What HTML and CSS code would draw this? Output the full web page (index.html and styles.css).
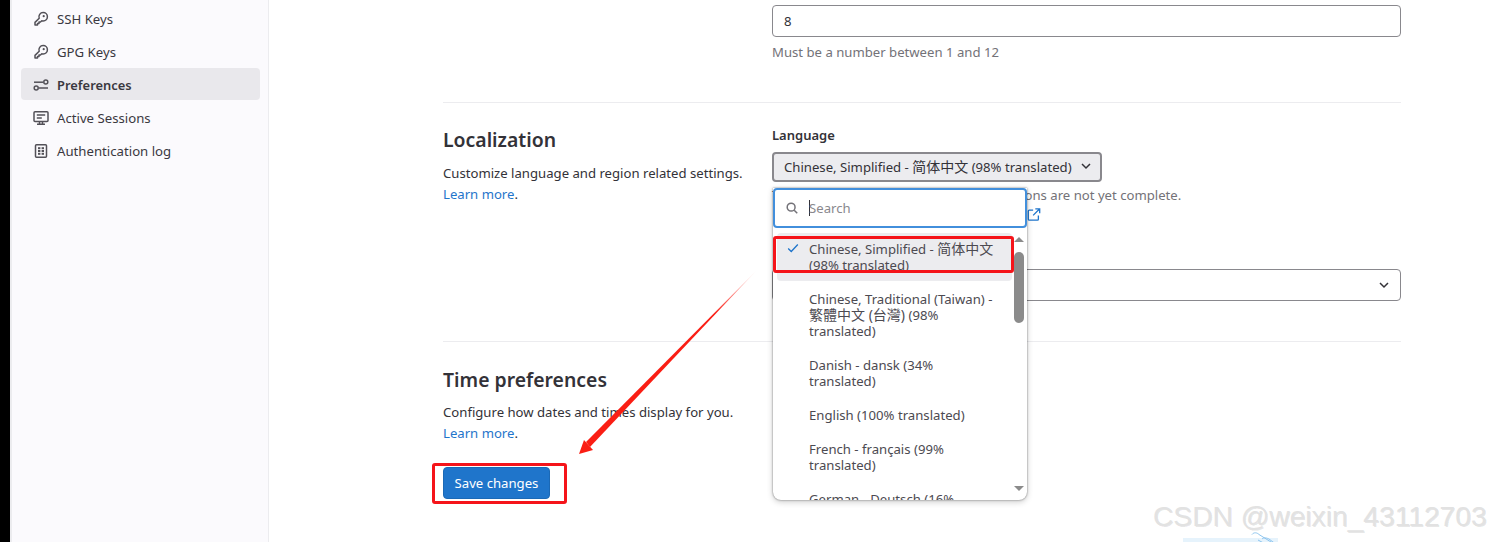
FILE: index.html
```html
<!DOCTYPE html>
<html lang="en">
<head>
<meta charset="utf-8">
<title>Preferences</title>
<link rel="stylesheet" href="styles.css">
</head>
<body>
<div class="page">
  <div class="edge"></div>
  <aside class="sidebar">
    <nav class="nav">
      <a class="nav-item"><svg class="nav-icon" viewBox="0 0 16 16"><path d="M10.2 1.6a4.2 4.2 0 0 1 0 8.4c-.5 0-1-.1-1.4-.2L7.5 11H6v1.5H4.500V14H2v-2.600l4.200-4.100A4.200 4.200 0 0 1 10.200 1.600z" fill="none" stroke="#535158" stroke-width="1.500" stroke-linejoin="round"/><circle cx="10.700" cy="5.200" r="1.100" fill="#535158"/></svg><span>SSH Keys</span></a>
      <a class="nav-item"><svg class="nav-icon" viewBox="0 0 16 16"><path d="M10.2 1.6a4.2 4.2 0 0 1 0 8.4c-.5 0-1-.1-1.4-.2L7.5 11H6v1.5H4.500V14H2v-2.600l4.200-4.100A4.200 4.200 0 0 1 10.200 1.600z" fill="none" stroke="#535158" stroke-width="1.500" stroke-linejoin="round"/><circle cx="10.700" cy="5.200" r="1.100" fill="#535158"/></svg><span>GPG Keys</span></a>
      <a class="nav-item active"><svg class="nav-icon" viewBox="0 0 16 16"><g fill="none" stroke="#535158" stroke-width="1.500"><path d="M1 5.200h9.300"/><circle cx="12.800" cy="5" r="2"/><circle cx="3.200" cy="11" r="2"/><path d="M5.700 11H15"/></g></svg><span>Preferences</span></a>
      <a class="nav-item"><svg class="nav-icon" viewBox="0 0 16 16"><g fill="none" stroke="#535158" stroke-width="1.500"><rect x="1" y="1.700" width="14" height="9.800" rx="1"/><path d="M3.800 5h8.400M3.800 8h5M6.500 11.500v2.500M9.500 11.500v2.500M4 14.300h8"/></g></svg><span>Active Sessions</span></a>
      <a class="nav-item"><svg class="nav-icon" viewBox="0 0 16 16"><g fill="none" stroke="#535158" stroke-width="1.500"><rect x="2.500" y="1.700" width="11" height="12.600" rx="1"/></g><g fill="#535158"><rect x="5" y="4.200" width="2.400" height="2"/><rect x="8.600" y="4.200" width="2.400" height="2"/><rect x="5" y="7" width="2.400" height="2"/><rect x="8.600" y="7" width="2.400" height="2"/><rect x="5" y="9.800" width="2.400" height="2"/><rect x="8.600" y="9.800" width="2.400" height="2"/></g></svg><span>Authentication log</span></a>
    </nav>
  </aside>
  <main class="main">
    <section class="row row-first">
      <div class="row-side"></div>
      <div class="row-body">
        <div class="text-input">8</div>
        <p class="help">Must be a number between 1 and 12</p>
      </div>
    </section>
    <section class="row row-local">
      <div class="row-side">
        <h2 class="title">Localization</h2>
        <p class="desc">Customize language and region related settings.</p>
        <p class="desc"><a class="link">Learn more</a>.</p>
      </div>
      <div class="row-body">
        <label class="label">Language</label>
        <div class="lang-field">
          <button class="select-btn" type="button"><span>Chinese, Simplified - <span class="cjk">简体中文</span> (98% translated)</span><svg class="chev" viewBox="0 0 16 16"><path d="M4 6l4 4 4-4" fill="none" stroke="#333238" stroke-width="1.500"/></svg></button>
          <p class="help help-lang">This feature is experimental and translations are not yet complete.</p>
          <p class="help help-link"><svg class="ext" viewBox="0 0 16 16"><path d="M7 3H2.500A1.000 1.000 0 0 0 1.500 4v9.500a1 1 0 0 0 1 1H12a1 1 0 0 0 1-1V9M9.500 1.500h5v5M14.500 1.500L7 9" fill="none" stroke="#1f75cb" stroke-width="1.500"/></svg></p>
          <div class="dropdown">
            <div class="search">
              <svg class="search-icon" viewBox="0 0 16 16"><circle cx="7" cy="7" r="4.500" fill="none" stroke="#737278" stroke-width="1.700"/><path d="M10.500 10.500L14 14" stroke="#737278" stroke-width="1.700"/></svg>
              <span class="caret"></span><span class="placeholder">Search</span>
            </div>
            <div class="list-wrap">
              <ul class="list">
                <li class="option selected"><svg class="check" viewBox="0 0 16 16"><path d="M2.500 8.500l3.500 3.500 7.500-8" fill="none" stroke="#1f75cb" stroke-width="1.500"/></svg>Chinese, Simplified - <span class="cjk">简体中文</span> (98% translated)</li>
                <li class="option">Chinese, Traditional (Taiwan) - <span class="cjk">繁體中文 (台灣)</span> (98% translated)</li>
                <li class="option">Danish - dansk (34% translated)</li>
                <li class="option">English (100% translated)</li>
                <li class="option">French - français (99% translated)</li>
                <li class="option">German - Deutsch (16% translated)</li>
              </ul>
              <div class="scrollbar">
                <span class="arrow-up"></span>
                <span class="thumb"></span>
                <span class="arrow-down"></span>
              </div>
            </div>
          </div>
        </div>
        <div class="select-wide"><svg class="chev" viewBox="0 0 16 16"><path d="M4 6l4 4 4-4" fill="none" stroke="#333238" stroke-width="1.500"/></svg></div>
      </div>
    </section>
    <section class="row row-time">
      <div class="row-side">
        <h2 class="title">Time preferences</h2>
        <p class="desc">Configure how dates and times display for you.</p>
        <p class="desc"><a class="link">Learn more</a>.</p>
        <button class="save" type="button">Save changes</button>
      </div>
      <div class="row-body"></div>
    </section>
  </main>
  <div class="mark mark-save"></div>
  <div class="mark mark-option"></div>
  <svg class="arrow" viewBox="0 0 1490 542">
    <defs><linearGradient id="fade" gradientUnits="userSpaceOnUse" x1="757" y1="270" x2="590" y2="445"><stop offset="0" stop-color="#fa1e14" stop-opacity="0"/><stop offset=".25" stop-color="#fa1e14"/><stop offset="1" stop-color="#fa1e14"/></linearGradient></defs>
    <polygon points="757,270 586,442 590,447" fill="url(#fade)"/>
    <polygon points="579,454 584,440 593,450" fill="#fa1e14"/>
  </svg>
  <div class="watermark">CSDN @weixin_43112703</div>
  <div class="tag"></div>
  <svg class="clip" viewBox="0 0 30 14"><path d="M2 2.500c2-2.500 5-2 7 0l16 10c2 1.500 0 4-3 3L8 8" fill="none" stroke="#8cc4ee" stroke-width="1"/><path d="M12 7c2-2 5-1 7 0l8 6" fill="none" stroke="#8cc4ee" stroke-width="1"/></svg>
</div>
</body>
</html>
```
FILE: styles.css
```css
* { box-sizing: border-box; }
html, body { margin: 0; padding: 0; background: #fff; }
body {
  font-family: "Noto Sans", "Noto Sans CJK SC", sans-serif;
  font-size: 13.15px;
  color: #333238;
}
.cjk { font-size: 14px; }
.page {
  position: relative;
  width: 1490px;
  height: 542px;
  overflow: hidden;
  display: flex;
}
.edge { width: 10px; background: #000; flex: none; }
.sidebar {
  width: 259px;
  flex: none;
  background: #fbfafd;
  border-left: 2px solid #ececef;
  border-right: 1px solid #ececef;
  padding: 2px 8px 0 9px;
}
.nav { display: flex; flex-direction: column; gap: 1px; }
.nav-item {
  height: 32px;
  display: flex;
  align-items: center;
  gap: 8px;
  padding: 2px 12px 0;
  border-radius: 4px;
  color: #3a383f;
  font-size: 13.2px;
}
.nav-item.active { background: #e9e8ec; font-weight: 600; font-size: 12.9px; }
.nav-icon { width: 16px; height: 16px; flex: none; }
.main { flex: none; width: 958px; margin-left: 174px; }
.row { display: flex; }
.row-side { width: 329px; flex: none; }
.row-body { flex: 1; min-width: 0; }
.row-first { padding-top: 5px; height: 102px; }
.row-local { border-top: 1px solid #ececef; padding-top: 23px; height: 239px; }
.row-time { border-top: 1px solid #ececef; padding-top: 24px; }
.text-input {
  height: 32px;
  border: 1px solid #89888d;
  border-radius: 4px;
  padding: 0 11px;
  line-height: 30px;
}
.help { margin: 5px 0 0; color: #737278; line-height: 20px; }
.title { margin: 0 0 9px; font-size: 19.4px; font-weight: 600; line-height: 28px; color: #333238; }
.row-time .title { margin-bottom: 8px; }
.desc { margin: 0; line-height: 21px; }
.link { color: #1f75cb; }
.label { display: block; font-weight: 600; font-size: 13px; line-height: 20px; margin-bottom: 7px; margin-top: -1px; }
.lang-field { position: relative; }
.select-btn {
  display: flex;
  align-items: center;
  justify-content: space-between;
  width: 330px;
  height: 30px;
  padding: 0 6px 2px 10px;
  background: #ececef;
  border: 2px solid #89888d;
  border-radius: 4px;
  font: inherit;
  color: #333238;
}
.chev { width: 16px; height: 16px; flex: none; }
.help-lang { margin: 3px 0 0; }
.help-link { margin: 0; height: 18px; display: flex; align-items: center; justify-content: flex-end; width: 269px; }
.ext { width: 14px; height: 15px; flex: none; }
.select-wide {
  margin-top: 46px;
  height: 32px;
  border: 1px solid #89888d;
  border-radius: 4px;
  display: flex;
  justify-content: flex-end;
  align-items: center;
  padding-right: 8px;
}
.dropdown {
  position: absolute;
  left: 1px;
  top: 36px;
  width: 254px;
  height: 312px;
  background: #fff;
  border-radius: 0 0 8px 8px;
  box-shadow: 0 0 2px rgba(0,0,0,.55), 0 2px 6px rgba(0,0,0,.2);
  overflow: hidden;
  display: flex;
  flex-direction: column;
}
.search {
  flex: none;
  height: 40px;
  border: 2px solid #428fdc;
  border-radius: 4px;
  display: flex;
  align-items: center;
  padding-left: 10px;
  background: #fff;
}
.search-icon { width: 14px; height: 14px; flex: none; margin-right: 10px; }
.caret { width: 1px; height: 16px; background: #333238; flex: none; }
.placeholder { color: #89888d; margin-left: -1px; }
.list-wrap { flex: 1; min-height: 0; display: flex; }
.list {
  list-style: none;
  margin: 0;
  padding: 5px 0 0 4px;
  width: 239px;
  flex: none;
  overflow: hidden;
}
.option {
  position: relative;
  padding: 8px 14px 8px 32px;
  margin-bottom: 2px;
  border-radius: 4px;
  line-height: 16px;
  color: #4c4a51;
}
.option.selected { background: #ececef; }
.check { position: absolute; left: 9px; top: 8px; width: 14px; height: 14px; }
.scrollbar {
  flex: 1;
  display: flex;
  flex-direction: column;
  align-items: center;
  padding: 9px 2px 0 0;
}
.arrow-up { width: 0; height: 0; border: 5px solid transparent; border-top: 0; border-bottom: 5px solid #8b8b8b; }
.thumb { width: 10px; height: 71px; margin-top: 10px; background: #8b8b8b; border-radius: 5px; }
.arrow-down { width: 0; height: 0; border: 5px solid transparent; border-bottom: 0; border-top: 5px solid #8b8b8b; margin-top: auto; margin-bottom: 9px; }
.save {
  display: block;
  margin-top: 23px;
  width: 107px;
  height: 32px;
  background: #1f75cb;
  border: 1px solid #1b69b6;
  border-radius: 4px;
  color: #fff;
  font: inherit;
  padding: 0;
}
.mark {
  position: absolute;
  border: 3px solid #f5141a;
  border-radius: 3px;
}
.mark-save { left: 432px; top: 463px; width: 135px; height: 41px; }
.mark-option { left: 773px; top: 236px; width: 241px; height: 37px; }
.arrow { position: absolute; inset: 0; width: 1490px; height: 542px; pointer-events: none; }
.watermark {
  position: absolute;
  left: 1153px;
  top: 499px;
  font-family: "Liberation Sans", sans-serif;
  font-size: 28.2px;
  line-height: 34px;
  color: #e2e2e2;
  text-shadow: 1px 1px 0 rgba(0,0,0,.1);
  white-space: nowrap;
}
.tag { position: absolute; left: 1183px; top: 538px; width: 95px; height: 4px; background: #e6f3fc; }
.clip { position: absolute; left: 1250px; top: 532px; width: 30px; height: 14px; }
```
